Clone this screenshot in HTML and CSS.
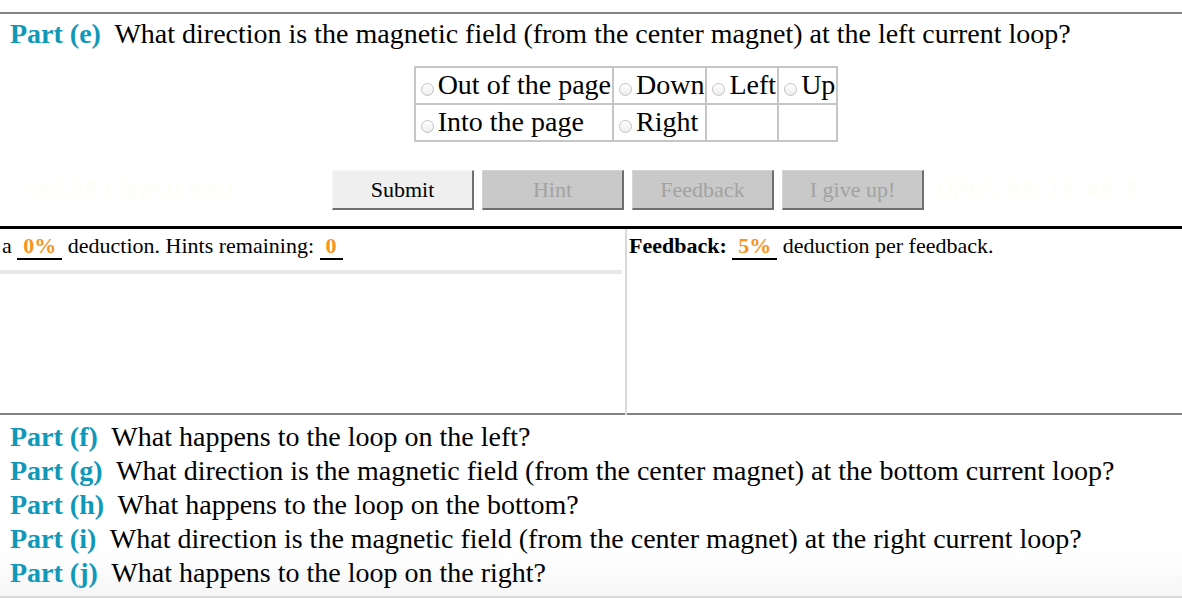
FILE: index.html
```html
<!DOCTYPE html>
<html lang="en">
<head>
<meta charset="utf-8">
<title>Part (e)</title>
<link rel="stylesheet" href="styles.css">
</head>
<body>
<div class="page">
  <section class="part-current">
    <p class="question"><span class="label">Part (e)</span> What direction is the magnetic field (from the center magnet) at the left current loop?</p>
    <div class="choices-wrap">
      <table class="choices">
        <tr>
          <td><label><input type="radio" name="dir"><span>Out of the page</span></label></td>
          <td><label><input type="radio" name="dir"><span>Down</span></label></td>
          <td><label><input type="radio" name="dir"><span>Left</span></label></td>
          <td><label><input type="radio" name="dir"><span>Up</span></label></td>
        </tr>
        <tr>
          <td><label><input type="radio" name="dir"><span>Into the page</span></label></td>
          <td><label><input type="radio" name="dir"><span>Right</span></label></td>
          <td></td>
          <td></td>
        </tr>
      </table>
    </div>
    <div class="actions">
      <div class="ghost-left"><span class="ghost">ha5381@psu.edu</span></div>
      <div class="buttons">
        <button class="btn">Submit</button>
        <button class="btn disabled">Hint</button>
        <button class="btn disabled">Feedback</button>
        <button class="btn disabled">I give up!</button>
      </div>
      <div class="ghost-right"><span class="ghost">0P65-BB-1F-46-8</span></div>
    </div>
  </section>

  <section class="panel">
    <div class="col col-left">
      <p class="info">a <span class="num">0%</span> deduction. Hints remaining: <span class="num">0</span></p>
      <div class="bar"></div>
    </div>
    <div class="col col-right">
      <p class="info"><b>Feedback:</b> <span class="num">5%</span> deduction per feedback.</p>
    </div>
  </section>

  <section class="parts">
    <p class="question"><span class="label">Part (f)</span> What happens to the loop on the left?</p>
    <p class="question"><span class="label">Part (g)</span> What direction is the magnetic field (from the center magnet) at the bottom current loop?</p>
    <p class="question"><span class="label">Part (h)</span> What happens to the loop on the bottom?</p>
    <p class="question"><span class="label">Part (i)</span> What direction is the magnetic field (from the center magnet) at the right current loop?</p>
    <p class="question"><span class="label">Part (j)</span> What happens to the loop on the right?</p>
  </section>
</div>
</body>
</html>
```

FILE: styles.css
```css
html, body {
  margin: 0;
  padding: 0;
  background: #ffffff;
}

body {
  font-family: "Liberation Serif", "Times New Roman", serif;
  color: #000;
  overflow: hidden;
}

.page {
  padding-top: 12px;
  width: 1182px;
}

p { margin: 0; }

.question {
  font-size: 28px;
  line-height: 34px;
  white-space: nowrap;
}

.label {
  color: #1198b8;
  font-weight: bold;
  margin-right: 7px;
}

.part-current {
  border-top: 2px solid #838383;
  padding: 3px 10px 0;
}

.choices-wrap {
  display: flex;
  justify-content: center;
  padding-left: 70px;
  margin-top: 15px;
}

.choices {
  border-collapse: collapse;
  font-size: 28px;
}

.choices td {
  border: 2px solid #c6c6c6;
  padding: 1px 1px 2px;
  line-height: 32px;
  white-space: nowrap;
}

.choices label {
  display: inline-flex;
  align-items: baseline;
}

.choices input {
  appearance: none;
  -webkit-appearance: none;
  width: 13px;
  height: 13px;
  margin: 0 4px 0 4px;
  border: 1px solid #c2c2c2;
  border-radius: 50%;
  background: linear-gradient(#ffffff, #ededed);
  box-sizing: border-box;
  position: relative;
  top: 2px;
}

.actions {
  display: grid;
  grid-template-columns: 332px auto 1fr;
  margin: 28px -10px 0;
  align-items: center;
}

.ghost-left {
  display: flex;
  justify-content: flex-end;
  padding-right: 98px;
  white-space: nowrap;
}

.ghost-right {
  padding-left: 14px;
  white-space: nowrap;
}

.ghost {
  font-family: "DejaVu Sans", sans-serif;
  font-size: 24px;
  color: #fefef7;
}

.buttons {
  display: flex;
  gap: 8px;
}

.btn {
  width: 142px;
  height: 40px;
  font-family: "Liberation Serif", "Times New Roman", serif;
  font-size: 22px;
  color: #000;
  background: #efefef;
  border-top: 1px solid #f6f6f6;
  border-left: 1px solid #f6f6f6;
  border-right: 2px solid #6f6f6f;
  border-bottom: 2px solid #6f6f6f;
  padding: 0;
}

.btn.disabled {
  background: #c9c9c9;
  color: #a2a2a2;
  border-top-color: #d4d4d4;
  border-left-color: #d4d4d4;
}

.panel {
  margin-top: 16px;
  border-top: 3px solid #000;
  border-bottom: 2px solid #838383;
  display: grid;
  grid-template-columns: 627px 1fr;
  height: 184px;
}

.col {
  padding-top: 4px;
}

.col-left {
  padding-left: 2px;
  border-right: 2px solid #d9d9d9;
  margin-bottom: -2px;
}

.col-right {
  padding-left: 2px;
}

.info {
  font-size: 22px;
  line-height: 25px;
  white-space: nowrap;
}

.num {
  color: #f7931e;
  font-weight: bold;
  border-bottom: 2px solid #000;
  padding: 0 6px;
}

.bar {
  height: 4px;
  background: #e8e8e8;
  margin: 12px 3px 0 -2px;
}

.parts {
  padding: 5px 10px 6px;
  border-bottom: 2px solid #dadada;
  background: linear-gradient(to bottom, #ffffff 75%, #f6f6f6 100%);
}
```
